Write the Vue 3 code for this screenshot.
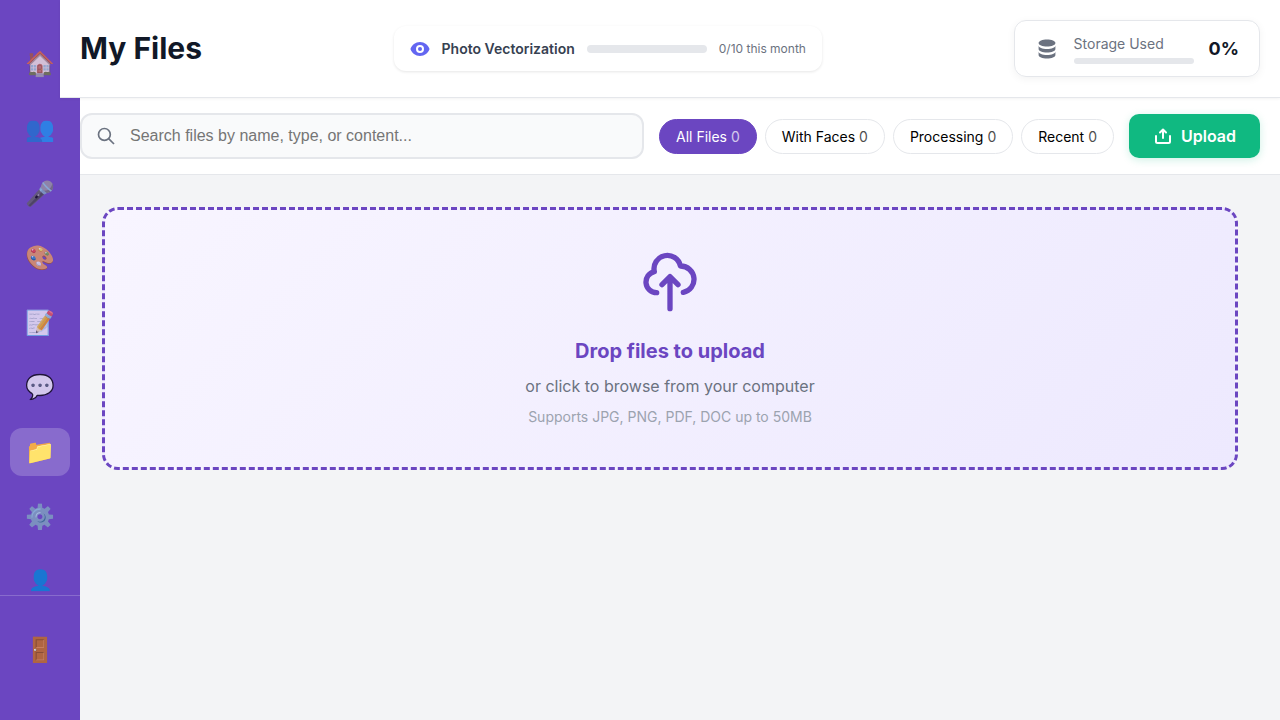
<script setup>
const nav = [
  { icon: '🏠' }, { icon: '👥' }, { icon: '🎤' }, { icon: '🎨' }, { icon: '📝' },
  { icon: '💬' }, { icon: '📁', active: true }, { icon: '⚙️' }, { icon: '👤', solid: true },
]
const filters = [
  { label: 'All Files', count: 0, active: true },
  { label: 'With Faces', count: 0 },
  { label: 'Processing', count: 0 },
  { label: 'Recent', count: 0 },
]
</script>

<template>
  <div class="app">
    <aside class="sidebar">
      <nav class="nav">
        <a v-for="n in nav" :key="n.icon" class="item" :class="{ active: n.active, solid: n.solid }"><span>{{ n.icon }}</span></a>
      </nav>
      <div class="foot"><a class="item exit"><span>🚪</span></a></div>
    </aside>
    <div class="page">
      <header class="header">
        <h1>My Files</h1>
        <div class="quota">
          <svg width="20" height="20" viewBox="0 0 20 20" fill="currentColor"><path d="M10 12a2 2 0 100-4 2 2 0 000 4z" /><path fill-rule="evenodd" d="M.458 10C1.732 5.943 5.522 3 10 3s8.268 2.943 9.542 7c-1.274 4.057-5.064 7-9.542 7S1.732 14.057.458 10zM14 10a4 4 0 11-8 0 4 4 0 018 0z" /></svg>
          <span class="quota-name">Photo Vectorization</span>
          <span class="quota-bar"></span>
          <span class="quota-text">0/10 this month</span>
        </div>
        <div class="storage">
          <svg width="24" height="24" viewBox="0 0 20 20" fill="currentColor"><path d="M3 12v3c0 1.657 3.134 3 7 3s7-1.343 7-3v-3c0 1.657-3.134 3-7 3s-7-1.343-7-3z" /><path d="M3 7v3c0 1.657 3.134 3 7 3s7-1.343 7-3V7c0 1.657-3.134 3-7 3S3 8.657 3 7z" /><path d="M17 5c0 1.657-3.134 3-7 3S3 6.657 3 5s3.134-3 7-3 7 1.343 7 3z" /></svg>
          <div class="storage-info"><span>Storage Used</span><i></i></div>
          <strong>0%</strong>
        </div>
      </header>
      <section class="toolbar">
        <label class="search">
          <svg width="20" height="20" viewBox="0 0 20 20" fill="none" stroke="currentColor" stroke-width="1.7"><circle cx="8.4" cy="8.4" r="5.9" /><path d="M12.6 12.6L18 18" /></svg>
          <input placeholder="Search files by name, type, or content..." />
        </label>
        <div class="filters">
          <button v-for="f in filters" :key="f.label" class="chip" :class="{ on: f.active }">{{ f.label }} <span>{{ f.count }}</span></button>
        </div>
        <button class="upload">
          <svg width="20" height="20" viewBox="0 0 20 20" fill="none" stroke="currentColor" stroke-width="2" stroke-linecap="round" stroke-linejoin="round"><path d="M3 10v5.5a1.5 1.5 0 0 0 1.5 1.5h11a1.5 1.5 0 0 0 1.5-1.5V10M10 12V3.5M7 6.5L10 3.5l3 3" /></svg>
          <span>Upload</span>
        </button>
      </section>
      <main class="content">
        <div class="drop">
          <svg width="64" height="64" viewBox="0 0 24 24" fill="none" stroke="currentColor" stroke-width="2" stroke-linecap="round" stroke-linejoin="round"><path d="M7 16a4 4 0 01-.88-7.903A5 5 0 1115.9 6L16 6a5 5 0 011 9.9M15 13l-3-3m0 0l-3 3m3-3v12" /></svg>
          <h2>Drop files to upload</h2>
          <p>or click to browse from your computer</p>
          <small>Supports JPG, PNG, PDF, DOC up to 50MB</small>
        </div>
      </main>
    </div>
  </div>
</template>

<style>
html, body { margin: 0; background: #f3f4f6; overflow: hidden; }
</style>
<style scoped>
* { box-sizing: border-box; }
.app { display: flex; height: 720px; font-family: Inter, "Liberation Sans", sans-serif; background: #f3f4f6; color: #111827; }
.sidebar { width: 80px; flex: none; background: #6b46c1; display: flex; flex-direction: column; }
.nav { height: 595px; padding-top: 40.25px; display: flex; flex-direction: column; align-items: center; gap: 16.63px; overflow: hidden; }
.item { width: 60px; height: 48px; flex: none; border-radius: 12px; display: flex; align-items: center; justify-content: center; font-size: 24px; line-height: 1; }
.item span { opacity: .7; }
.item.active { background: rgba(255, 255, 255, .2); }
.item.active span, .item.solid span, .item.exit span { opacity: 1; }
.item.solid { font-size: 20px; height: 46px; }
.foot { flex: 1; border-top: 1px solid rgba(255, 255, 255, .2); padding-top: 30px; display: flex; justify-content: center; }
.page { flex: 1; min-width: 0; display: flex; flex-direction: column; }
.header { height: 98px; flex: none; margin-left: -20px; padding: 0 20px; background: #fff; border-bottom: 1px solid #e5e7eb; box-shadow: 0 1px 3px rgba(0, 0, 0, .05); display: flex; align-items: center; justify-content: space-between; position: relative; z-index: 1; }
h1 { margin: 0; font-size: 30px; line-height: 37px; font-weight: 700; }
.quota { height: 45px; padding: 0 16px; border-radius: 12px; display: flex; align-items: center; gap: 12px; box-shadow: 0 1px 3px rgba(0, 0, 0, .1); color: #6366f1; }
.quota-name { font-size: 14px; font-weight: 600; color: #374151; }
.quota-bar { width: 120px; height: 8px; border-radius: 4px; background: #e5e7eb; }
.quota-text { font-size: 12px; color: #6b7280; }
.storage { height: 57px; padding: 0 20px; display: flex; align-items: center; border: 1px solid #e5e7eb; border-radius: 12px; box-shadow: 0 2px 8px rgba(0, 0, 0, .05); color: #6b7280; }
.storage-info { margin: 0 15px; width: 120px; display: flex; flex-direction: column; gap: 6px; padding-top: 1px; font-size: 14px; line-height: 17px; }
.storage-info i { height: 6px; border-radius: 3px; background: #e5e7eb; }
.storage strong { font-size: 18px; color: #111827; }
.toolbar { height: 77px; flex: none; background: #fff; border-bottom: 1px solid #e5e7eb; padding: 0 20px 0 0; display: flex; align-items: center; gap: 15px; }
.search { flex: 1; height: 46px; display: flex; align-items: center; gap: 14px; padding: 0 14px; border: 2px solid #e5e7eb; border-radius: 12px; background: #f9fafb; color: #6b7280; }
.search input { flex: 1; min-width: 0; border: 0; padding: 0; outline: 0; background: none; font: 16px "Liberation Sans", Arial, sans-serif; }
.filters { display: flex; gap: 8px; }
.chip { height: 35px; padding: 0 16px; border: 1px solid #e5e7eb; border-radius: 20px; background: #fff; color: #000; font: 400 14px Inter, sans-serif; white-space: nowrap; }
.chip span { opacity: .7; }
.chip.on { background: #6b46c1; border-color: #6b46c1; color: #fff; }
.upload { height: 44px; padding: 0 24px; border: 0; border-radius: 10px; background: #10b981; color: #fff; display: flex; align-items: center; gap: 8px; font: 600 16px Inter, sans-serif; box-shadow: 0 2px 8px rgba(16, 185, 129, .2); }
.content { padding: 32px 42px 0 22px; }
.drop { height: 263px; border: 3px dashed #6b46c1; border-radius: 16px; background: linear-gradient(135deg, #f8f5ff, #ede9fe); padding-top: 40px; display: flex; flex-direction: column; align-items: center; color: #6b46c1; }
h2 { margin: 25px 0 0; font-size: 20px; line-height: 24px; font-weight: 700; }
p { margin: 14px 0 0; font-size: 16px; line-height: 19px; color: #6b7280; }
small { margin-top: 12px; font-size: 14px; line-height: 17px; color: #9ca3af; }
</style>
